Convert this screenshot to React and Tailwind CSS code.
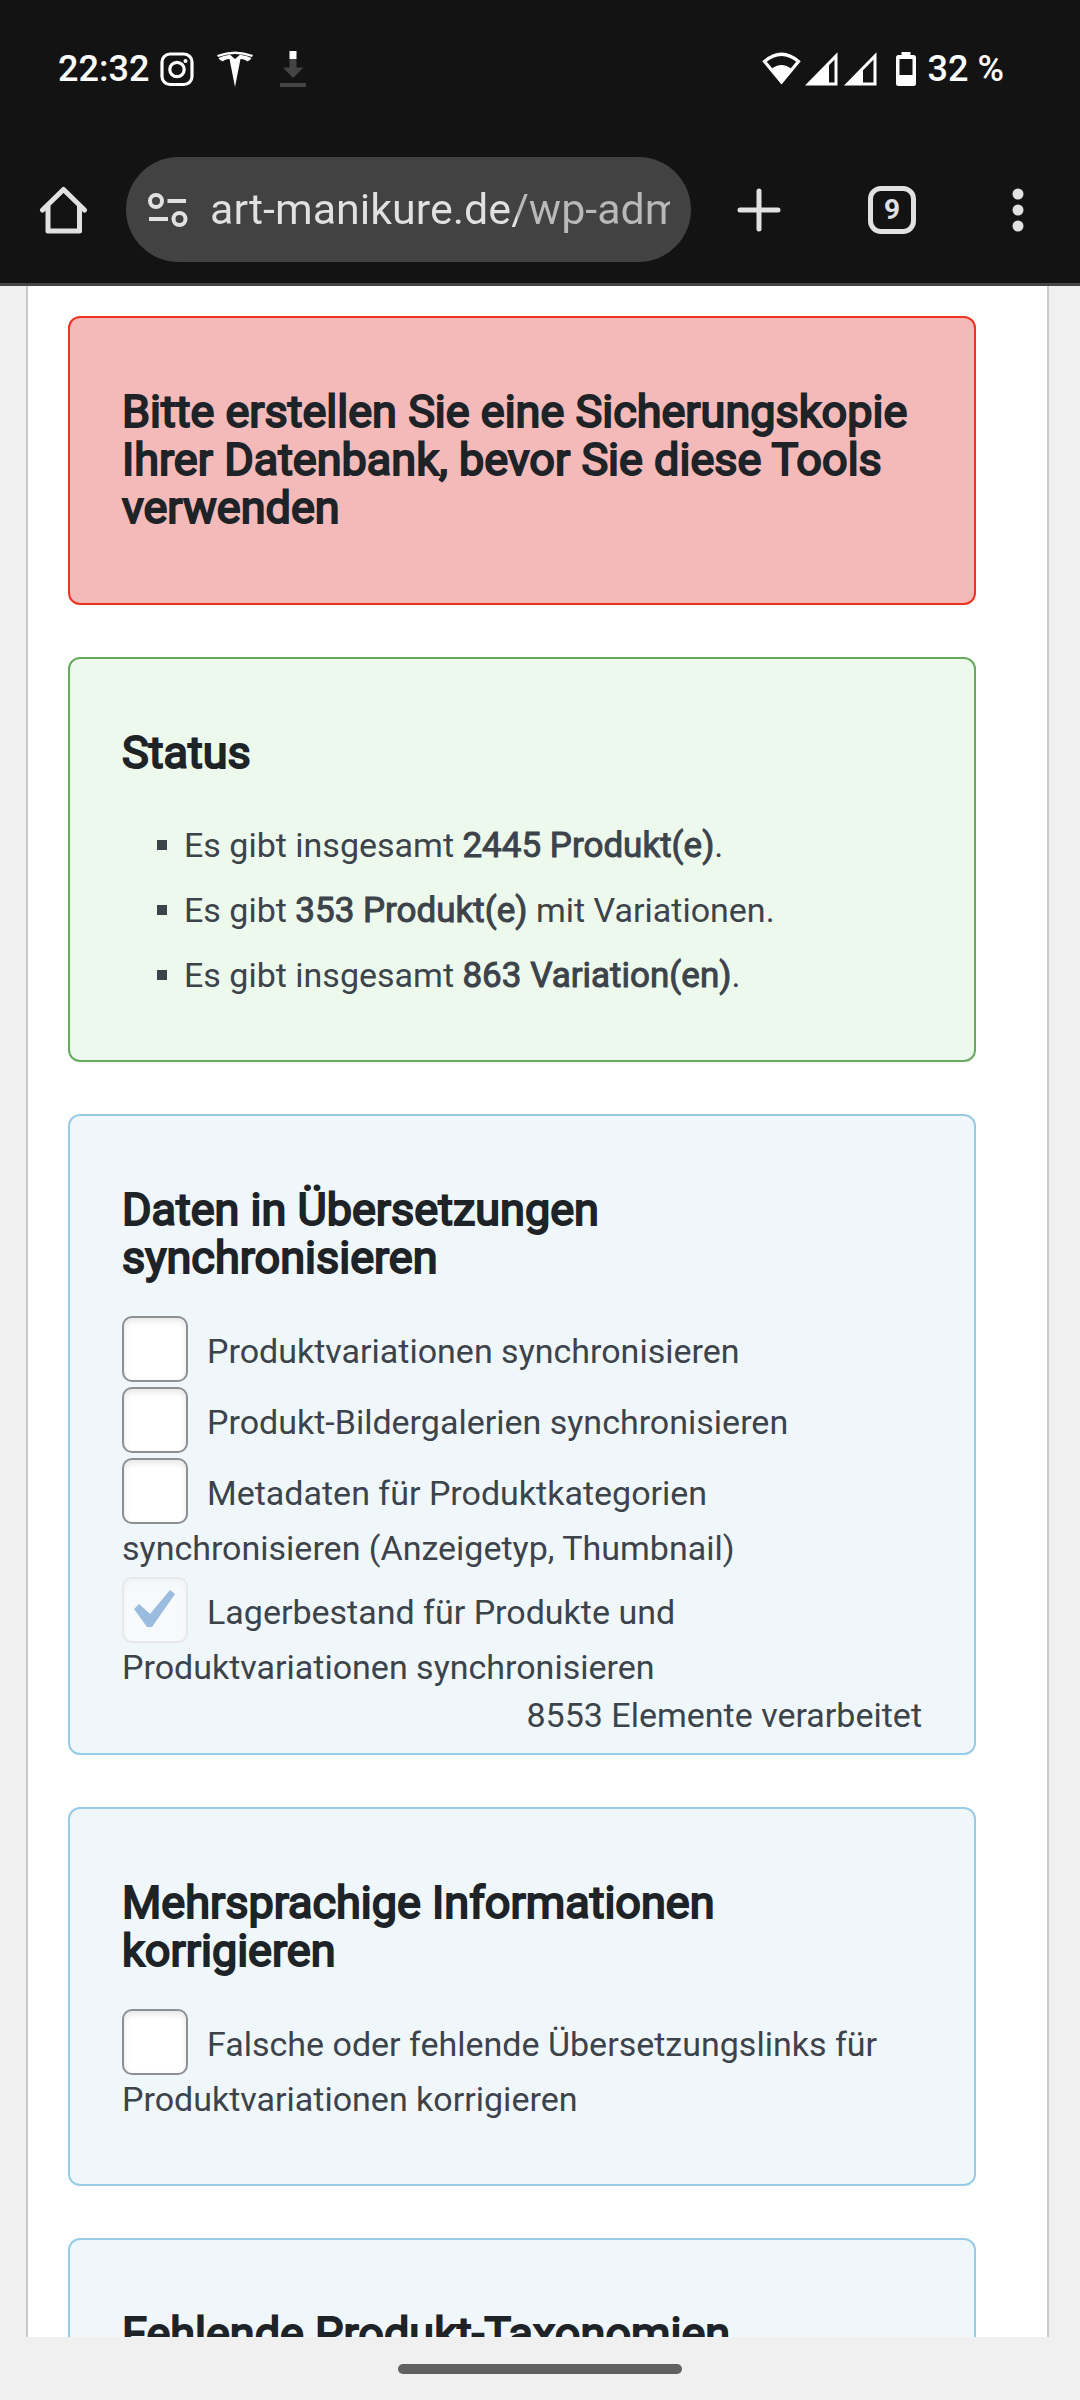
import React from "react";

function StatusBar() {
  return (
    <div className="flex h-[137px] items-center justify-between pl-[58px] pr-[76px] text-[36px] font-medium text-white">
      <div className="flex items-center">
        <span className="w-[102px]">22:32</span>
        <svg className="mr-[23px]" width="34" height="36" viewBox="0 0 34 36" fill="none" stroke="white" strokeWidth="3.200" aria-hidden="true">
          <rect x="2" y="3" width="30" height="30.500" rx="8" />
          <circle cx="17" cy="18.500" r="7.200" />
          <circle cx="25.500" cy="10" r="2" fill="white" stroke="none" />
        </svg>
        <svg className="mr-[27px]" width="36" height="36" viewBox="0 0 36 36" fill="white" aria-hidden="true">
          <path d="M0 4Q18 -3 36 4L35 6Q18 0 1 6Z" />
          <path d="M1.500 7Q6 4.500 13 3.800L18 8L23 3.800Q30 4.500 34.500 7Q33 10 30 10.500Q29 8.500 23.500 8L18 36L12.500 8Q7 8.500 6 10.500Q3 10 1.500 7Z" />
        </svg>
        <svg width="26" height="36" viewBox="0 0 26 36" fill="#444444" aria-hidden="true">
          <path d="M9.500 8H16.500V16.500H23.500L13 27L3 16.500H9.500Z" />
          <rect x="9.500" y="0" width="7" height="8" fill="white" />
          <rect x="0" y="32" width="26" height="4" />
        </svg>
      </div>
      <div className="flex items-center">
        <svg width="40" height="36" viewBox="0 0 40 36" aria-hidden="true">
          <path d="M2.500 10.500Q19.500 -4 36.500 10.500L19.500 31Z" fill="none" stroke="white" strokeWidth="3.200" />
          <path d="M9.500 18Q19.500 10 29.500 18L19.500 33Z" fill="white" />
        </svg>
        <SignalIcon cut={24} />
        <SignalIcon cut={19} />
        <svg className="ml-4 mr-3" width="20" height="36" viewBox="0 0 20 36" aria-hidden="true">
          <path fillRule="evenodd" fill="white" d="M5.500 1H14.500V4H17.500Q20 4 20 6.500V33Q20 35 17.500 35H2.500Q0 35 0 33V6.500Q0 4 2.500 4H5.500ZM3.500 8V24H16.500V8Z" />
        </svg>
        <span>32 %</span>
      </div>
    </div>
  );
}

function SignalIcon({ cut }) {
  return (
    <svg className="mr-[3px] ml-[3px]" width="33" height="36" viewBox="0 0 33 36" aria-hidden="true">
      <path d="M3.500 33H31V5Z" fill="none" stroke="white" strokeWidth="3" />
      <path d={`M1 34H${cut}V${36 - cut}Z`} fill="white" />
    </svg>
  );
}

function BrowserBar() {
  return (
    <div className="flex h-[146px] items-center pl-[39px] pr-[55px] pb-[1px] text-[#e1e1e1]">
      <button type="button" aria-label="Startseite" className="mr-[37px] shrink-0">
        <svg width="50" height="50" viewBox="0 0 50 50" fill="none" stroke="currentColor" strokeWidth="5" strokeLinecap="round" strokeLinejoin="round" aria-hidden="true">
          <path d="M3.500 25L24.500 4.500L45.500 25M9 21V46H40.500V21" />
        </svg>
      </button>
      <div className="mr-[46px] flex h-[105px] min-w-0 flex-1 items-center rounded-full bg-[#424242] pl-[21px] pr-[21px]">
        <button type="button" aria-label="Website-Informationen" className="mr-[22px] shrink-0">
          <svg width="41" height="36" viewBox="0 0 41 36" fill="none" stroke="currentColor" strokeWidth="4" aria-hidden="true">
            <circle cx="9" cy="9" r="6" />
            <circle cx="32.500" cy="27" r="6" />
            <path d="M20.500 9H39M2 27H21" />
          </svg>
        </button>
        <input
          type="text"
          aria-label="Adresse"
          defaultValue="art-manikure.de/wp-admin"
          className="min-w-0 flex-1 bg-[linear-gradient(90deg,#e1e1e1_307px,#b9b9b9_307px)] bg-clip-text p-0 text-[43px] text-transparent outline-none"
        />
      </div>
      <button type="button" aria-label="Neuer Tab" className="mr-[87px] shrink-0">
        <svg width="44" height="44" viewBox="0 0 44 44" stroke="currentColor" strokeWidth="5" strokeLinecap="round" aria-hidden="true">
          <path d="M22 3V41M3 22H41" />
        </svg>
      </button>
      <button type="button" aria-label="Tabs wechseln" className="mr-[95px] flex size-12 shrink-0 items-center justify-center rounded-[13px] border-[5px] border-[#e1e1e1] text-[28px] font-bold">
        9
      </button>
      <button type="button" aria-label="Menü" className="shrink-0">
        <svg width="14" height="46" viewBox="0 0 14 46" fill="currentColor" aria-hidden="true">
          <circle cx="7" cy="7" r="5.500" />
          <circle cx="7" cy="23" r="5.500" />
          <circle cx="7" cy="39" r="5.500" />
        </svg>
      </button>
    </div>
  );
}

function Card({ title, className, children }) {
  return (
    <section className={`rounded-xl border-2 px-[52px] pt-[70px] ${className}`}>
      <h3 className="mb-[29px] text-[45px] leading-[48px] text-[#1d2327] [-webkit-text-stroke:2px_#1d2327]">{title}</h3>
      {children}
    </section>
  );
}

function Strong({ children }) {
  return <strong className="text-[35px] font-normal [-webkit-text-stroke:1px_#3c434a]">{children}</strong>;
}

function StatusItem({ children }) {
  return (
    <li className="flex h-12 items-center gap-[17px]">
      <span className="size-[10px] bg-[#3c434a]" />
      <p>{children}</p>
    </li>
  );
}

function Option({ label, done }) {
  return (
    <li>
      <label>
        <span className="relative mt-[5px] mr-[19px] inline-block size-[66px] align-[-19px]">
          <input
            type="checkbox"
            defaultChecked={done}
            disabled={done}
            className="block size-full appearance-none rounded-[10px] border-2 border-[#8c8f94] bg-white shadow-[inset_0_3px_6px_rgba(0,0,0,0.1)] disabled:border-[#e6e8ea] disabled:bg-[#f6fafd] disabled:shadow-[inset_0_3px_6px_rgba(0,0,0,0.03)]"
          />
          {done && (
            <svg className="pointer-events-none absolute inset-0" width="66" height="66" viewBox="0 0 66 66" fill="#9cbcdf" aria-hidden="true">
              <path d="M12 32L17 27L28 37L48 13L53 17L30 50H25Z" />
            </svg>
          )}
        </span>
        {label}
      </label>
    </li>
  );
}

const BLUE = "border-[#9acbe6] bg-[#f0f7fb]";

export default function App() {
  return (
    <div className="flex h-screen flex-col bg-[#f0f0f0] font-[Roboto,sans-serif]">
      <header className="shrink-0 border-b-[3px] border-[#454545] bg-[#131313]">
        <StatusBar />
        <BrowserBar />
      </header>
      <main className="mr-[31px] ml-[26px] min-h-0 flex-1 overflow-hidden border-x-2 border-[#c9cacb] bg-white pt-[30px] pr-[71px] pl-10 text-[34px] leading-[48px] text-[#3c434a]">
        <div className="flex flex-col gap-[52px]">
          <Card title="Bitte erstellen Sie eine Sicherungskopie Ihrer Datenbank, bevor Sie diese Tools verwenden" className="border-[#ee3322] bg-[#f4baba] pb-[42px]" />
          <Card title="Status" className="border-[#66a95f] bg-[#eef9ee] pb-[61px]">
            <ul className="flex flex-col gap-[17px] pt-[15px] pl-[35px]">
              <StatusItem>Es gibt insgesamt <Strong>2445 Produkt(e)</Strong>.</StatusItem>
              <StatusItem>Es gibt <Strong>353 Produkt(e)</Strong> mit Variationen.</StatusItem>
              <StatusItem>Es gibt insgesamt <Strong>863 Variation(en)</Strong>.</StatusItem>
            </ul>
          </Card>
          <Card title="Daten in Übersetzungen synchronisieren" className={`${BLUE} pb-[14px]`}>
            <ul>
              <Option label="Produktvariationen synchronisieren" />
              <Option label="Produkt-Bildergalerien synchronisieren" />
              <Option label="Metadaten für Produktkategorien synchronisieren (Anzeigetyp, Thumbnail)" />
              <Option label="Lagerbestand für Produkte und Produktvariationen synchronisieren" done />
            </ul>
            <p className="text-right">8553 Elemente verarbeitet</p>
          </Card>
          <Card title="Mehrsprachige Informationen korrigieren" className={`${BLUE} pb-[61px]`}>
            <ul>
              <Option label="Falsche oder fehlende Übersetzungslinks für Produktvariationen korrigieren" />
            </ul>
          </Card>
          <Card title="Fehlende Produkt-Taxonomien" className={`${BLUE} pb-[61px]`} />
        </div>
      </main>
      <footer className="flex h-[63px] shrink-0 items-center justify-center">
        <div className="h-[10px] w-[284px] rounded-full bg-[#606060]" />
      </footer>
    </div>
  );
}
